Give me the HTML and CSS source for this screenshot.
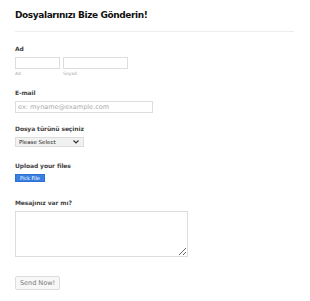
FILE: index.html
```html
<!DOCTYPE html>
<html lang="tr">
<head>
    <meta charset="UTF-8">
    <meta name="viewport" content="width=device-width, initial-scale=1.0">
    <title>Dosya Gönder</title>
    <link rel="stylesheet" href="styles.css">
</head>
<body>
    <form class="upload-form">
        <!-- başlık -->
        <div class="form-header">
            <h2>Dosyalarınızı Bize Gönderin!</h2>
        </div>

        <div class="field field-name">
            <label class="field-label">Ad</label>
            <div class="name-row">
                <div class="name-part first">
                    <input type="text">
                    <span class="sublabel">Ad</span>
                </div>
                <div class="name-part last">
                    <input type="text">
                    <span class="sublabel">Soyad</span>
                </div>
            </div>
        </div>

        <div class="field field-email">
            <label class="field-label">E-mail</label>
            <input type="text" class="email" placeholder="ex: myname@example.com">
        </div>

        <div class="field field-type">
            <label class="field-label">Dosya türünü seçiniz</label>
            <div class="select-wrap">
                <select class="type-select">
                    <option>Please Select</option>
                </select>
                <!-- ok işareti -->
                <svg class="select-arrow" width="6" height="4" viewBox="0 0 6 4">
                    <path d="M0.5 0.5 L3 3 L5.5 0.5" fill="none" stroke="#333" stroke-width="1.2"/>
                </svg>
            </div>
        </div>

        <div class="field field-upload">
            <label class="field-label">Upload your files</label>
            <button type="button" class="pick-btn">Pick File</button>
        </div>

        <div class="field field-message">
            <label class="field-label">Mesajınız var mı?</label>
            <textarea class="message"></textarea>
        </div>

        <div class="submit-row">
            <button type="button" class="send-btn">Send Now!</button>
        </div>
    </form>
</body>
</html>
```

FILE: styles.css
```css
* {
    margin: 0;
    padding: 0;
    box-sizing: border-box;
    font-family: 'DejaVu Sans', Verdana, sans-serif;
}

body {
    background: #fff;
    color: #333;
}

.upload-form {
    padding: 9px 16px 0 15px;
}

/* başlık */
.form-header {
    border-bottom: 1px solid #eee;
    padding-bottom: 10px;
    margin-bottom: 13px;
}

.form-header h2 {
    font-size: 9px;
    letter-spacing: -0.4px;
    font-weight: bold;
    color: #111;
    line-height: 12px;
}

.field-label {
    display: block;
    font-size: 6px;
    letter-spacing: -0.1px;
    font-weight: bold;
    color: #444;
    line-height: 8px;
    margin-bottom: 4px;
}

.field-name { margin-bottom: 13px; }
.field-email { margin-bottom: 12px; }
.field-type { margin-bottom: 15px; }
.field-upload { margin-bottom: 17px; }
.field-message { margin-bottom: 19px; }

.name-row {
    display: flex;
    gap: 3px;
}

.name-part {
    display: flex;
    flex-direction: column;
}

.name-part.first input { width: 45px; }
.name-part.last input { width: 65px; }

input[type="text"] {
    display: block;
    height: 12px;
    border: 1px solid #ddd;
    background: #fff;
    font-size: 6.5px;
    padding: 0 2px;
    outline: none;
}

.sublabel {
    font-size: 4.5px;
    color: #aaa;
    line-height: 5px;
    margin-top: 2px;
}

.email {
    width: 138px;
}

.email::placeholder {
    color: #aaa;
}

/* açılır liste */
.select-wrap {
    position: relative;
    width: 69px;
}

.type-select {
    appearance: none;
    -webkit-appearance: none;
    display: block;
    width: 69px;
    height: 10px;
    font-size: 5.5px;
    padding: 0 3px;
    border: 1px solid #ddd;
    border-radius: 0;
    background: #f1f1f1;
    color: #222;
    outline: none;
}

.select-arrow {
    position: absolute;
    right: 5px;
    top: 3px;
    pointer-events: none;
}

.pick-btn {
    display: block;
    width: 30px;
    height: 8px;
    font-size: 5px;
    line-height: 6px;
    color: #fff;
    background: #3a7fe0;
    border: 1px solid #2e6fd6;
}

.message {
    display: block;
    width: 173px;
    height: 46px;
    border: 1px solid #ddd;
    resize: vertical;
    outline: none;
}

.send-btn {
    display: block;
    width: 45px;
    height: 14px;
    font-size: 6.5px;
    color: #777;
    background: #f7f7f7;
    border: 1px solid #ddd;
    border-radius: 2px;
}
```
